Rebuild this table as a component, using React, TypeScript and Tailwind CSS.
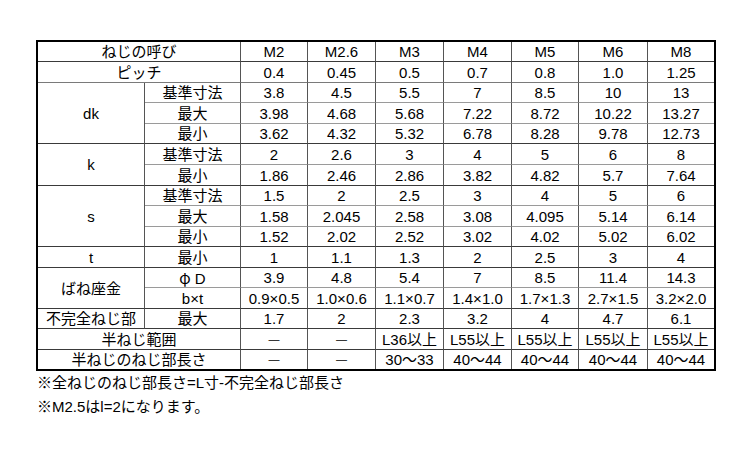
import React from "react";

type Row = {
  label?: { text: React.ReactNode; span: number; colSpan?: number };
  sub?: React.ReactNode;
  values: React.ReactNode[];
  end: "dark" | "light" | "mid" | "none";
};

const cjk = "font-['Noto_Sans_CJK_JP',sans-serif]";
const dash = <span className="text-[11px]">—</span>;

const rows: Row[] = [
  { label: { text: "ねじの呼び", span: 1, colSpan: 2 }, values: ["M2", "M2.6", "M3", "M4", "M5", "M6", "M8"], end: "dark" },
  { label: { text: "ピッチ", span: 1, colSpan: 2 }, values: ["0.4", "0.45", "0.5", "0.7", "0.8", "1.0", "1.25"], end: "mid" },
  { label: { text: "dk", span: 3 }, sub: "基準寸法", values: ["3.8", "4.5", "5.5", "7", "8.5", "10", "13"], end: "light" },
  { sub: "最大", values: ["3.98", "4.68", "5.68", "7.22", "8.72", "10.22", "13.27"], end: "light" },
  { sub: "最小", values: ["3.62", "4.32", "5.32", "6.78", "8.28", "9.78", "12.73"], end: "dark" },
  { label: { text: "k", span: 2 }, sub: "基準寸法", values: ["2", "2.6", "3", "4", "5", "6", "8"], end: "light" },
  { sub: "最小", values: ["1.86", "2.46", "2.86", "3.82", "4.82", "5.7", "7.64"], end: "dark" },
  { label: { text: "s", span: 3 }, sub: "基準寸法", values: ["1.5", "2", "2.5", "3", "4", "5", "6"], end: "light" },
  { sub: "最大", values: ["1.58", "2.045", "2.58", "3.08", "4.095", "5.14", "6.14"], end: "light" },
  { sub: "最小", values: ["1.52", "2.02", "2.52", "3.02", "4.02", "5.02", "6.02"], end: "dark" },
  { label: { text: "t", span: 1 }, sub: "最小", values: ["1", "1.1", "1.3", "2", "2.5", "3", "4"], end: "dark" },
  {
    label: { text: "ばね座金", span: 2 },
    sub: (
      <span>
        <span className={cjk}>φ</span> D
      </span>
    ),
    values: ["3.9", "4.8", "5.4", "7", "8.5", "11.4", "14.3"],
    end: "light",
  },
  { sub: "b×t", values: ["0.9×0.5", "1.0×0.6", "1.1×0.7", "1.4×1.0", "1.7×1.3", "2.7×1.5", "3.2×2.0"], end: "dark" },
  { label: { text: "不完全ねじ部", span: 1 }, sub: "最大", values: ["1.7", "2", "2.3", "3.2", "4", "4.7", "6.1"], end: "dark" },
  { label: { text: "半ねじ範囲", span: 1, colSpan: 2 }, values: [dash, dash, "L36以上", "L55以上", "L55以上", "L55以上", "L55以上"], end: "dark" },
  { label: { text: "半ねじのねじ部長さ", span: 1, colSpan: 2 }, values: [dash, dash, "30〜33", "40〜44", "40〜44", "40〜44", "40〜44"], end: "none" },
];

const bottomClass: Record<string, string> = {
  dark: "border-b border-b-[#3a3a3a]",
  mid: "border-b border-b-[#7a7a7a]",
  light: "border-b border-b-[#9a9a9a]",
  none: "",
};

const rowSpanClass: Record<number, string> = {
  1: "row-span-1",
  2: "row-span-2",
  3: "row-span-3",
};

export default function App() {
  const cells: React.ReactNode[] = [];
  rows.forEach((r, ri) => {
    if (r.label) {
      const lastRowIdx = ri + r.label.span - 1;
      const endKind = rows[lastRowIdx].end;
      cells.push(
        <div
          key={`l${ri}`}
          className={`${rowSpanClass[r.label.span]} ${r.label.colSpan === 2 ? "col-span-2" : "col-span-1"} flex items-center justify-center border-r border-r-[#555] ${bottomClass[endKind]}`}
        >
          {r.label.text}
        </div>
      );
    }
    if (r.sub) {
      cells.push(
        <div key={`s${ri}`} className={`flex items-center justify-center border-r border-r-[#555] ${bottomClass[r.end]}`}>
          {r.sub}
        </div>
      );
    }
    r.values.forEach((v, vi) => {
      cells.push(
        <div
          key={`v${ri}-${vi}`}
          className={`flex items-center justify-center whitespace-nowrap ${vi < 6 ? "border-r border-r-[#555]" : ""} ${bottomClass[r.end]}`}
        >
          {v}
        </div>
      );
    });
  });

  return (
    <div className="w-[750px] h-[450px] bg-white text-black font-['Liberation_Sans','Noto_Sans_CJK_JP',sans-serif] text-[15px]">
      <div className="pt-[40px] pl-[36px]">
        <div className="w-[680px] border-2 border-black">
          <div className="grid grid-cols-[107px_96px_67px_68px_68px_68px_67px_69px_66px] grid-rows-[20px_21px_20px_21px_20px_21px_21px_20px_21px_20px_21px_20px_21px_20px_21px_19px] leading-none">
            {cells}
          </div>
        </div>
        <div className="leading-[24px] pl-[1px]">
          <div>※全ねじのねじ部長さ=L寸-不完全ねじ部長さ</div>
          <div>※M2.5はl=2になります。</div>
        </div>
      </div>
    </div>
  );
}
